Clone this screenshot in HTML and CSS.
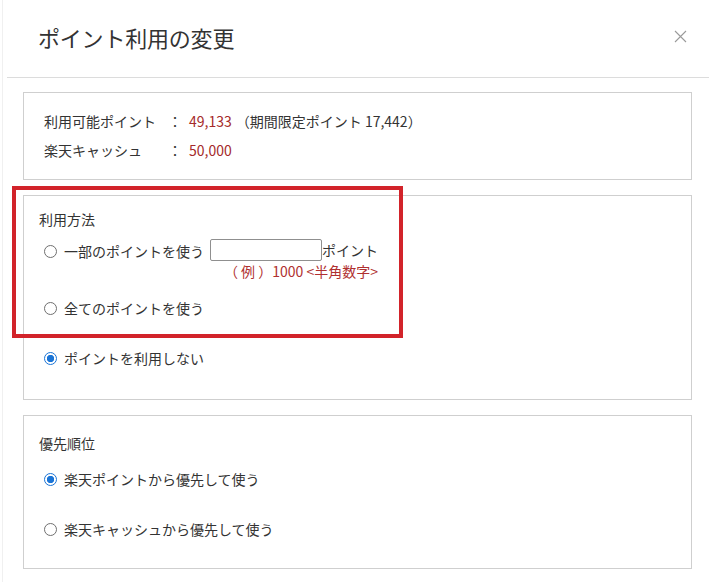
FILE: index.html
```html
<!DOCTYPE html>
<html lang="ja">
<head>
<meta charset="utf-8">
<title>ポイント利用の変更</title>
<link rel="stylesheet" href="styles.css">
</head>
<body>
<div class="modal">
  <header class="modal-header">
    <h1 class="modal-title">ポイント利用の変更</h1>
    <span class="close" aria-label="閉じる">
      <svg width="13" height="13" viewBox="0 0 13 13"><path d="M1 1L12 12M12 1L1 12" stroke="#9a9a9a" stroke-width="1.1" fill="none"/></svg>
    </span>
  </header>
  <div class="modal-body">
    <section class="box box-balance">
      <div class="bal-row"><span class="bal-label">利用可能ポイント</span><span class="bal-colon">：</span><span class="num">49,133</span><span class="bal-note">（期間限定ポイント 17,442）</span></div>
      <div class="bal-row"><span class="bal-label">楽天キャッシュ</span><span class="bal-colon">：</span><span class="num">50,000</span></div>
    </section>

    <section class="box box-method">
      <div class="box-title">利用方法</div>
      <div class="opt opt-partial">
        <span class="radio"></span>
        <span class="opt-label">一部のポイントを使う</span>
        <span class="amount">
          <span class="amount-line"><span class="amount-input"></span><span>ポイント</span></span>
          <span class="example">（ 例 ）1000 &lt;半角数字&gt;</span>
        </span>
      </div>
      <div class="opt opt-all"><span class="radio"></span><span class="opt-label">全てのポイントを使う</span></div>
      <div class="opt opt-none"><span class="radio checked"></span><span class="opt-label">ポイントを利用しない</span></div>
    </section>

    <section class="box box-priority">
      <div class="box-title">優先順位</div>
      <div class="opt opt-p1"><span class="radio checked"></span><span class="opt-label">楽天ポイントから優先して使う</span></div>
      <div class="opt opt-p2"><span class="radio"></span><span class="opt-label">楽天キャッシュから優先して使う</span></div>
    </section>
  </div>
</div>
<div class="highlight"></div>
</body>
</html>
```

FILE: styles.css
```css
* { box-sizing: border-box; }
html, body {
  margin: 0;
  padding: 0;
  background: #fff;
}
body {
  position: relative;
  width: 716px;
  height: 582px;
  overflow: hidden;
  font-family: "Noto Sans CJK JP", "Noto Sans", sans-serif;
  font-size: 14px;
  color: #333;
}
.modal {
  margin-left: 2px;
  border-left: 1px solid #f0f0f0;
  height: 582px;
}
.modal-header {
  margin: 0 7px 0 4px;
  height: 78px;
  border-bottom: 1px solid #dcdcdc;
  display: flex;
  align-items: center;
  justify-content: space-between;
  padding: 0 22px 4px 31px;
}
.modal-title {
  margin: 0;
  font-size: 22px;
  font-weight: normal;
  line-height: 30px;
  color: #333;
  letter-spacing: -0.2px;
}
.close {
  display: flex;
  width: 13px;
  height: 13px;
}
.modal-body {
  padding: 14px 24px 0 20px;
}
.box {
  border: 1px solid #cfcfcf;
  background: #fff;
}
.box + .box { margin-top: 15px; }

.box-balance {
  padding: 14px 20px;
  height: 88px;
}
.bal-row {
  line-height: 29px;
  display: flex;
  white-space: nowrap;
}
.bal-label { width: 124px; }
.bal-colon { width: 14px; margin-right: 7px; }
.num { color: #a52a2a; }
.bal-note { margin-left: 4px; }

.box-method {
  height: 205px;
  padding: 13px 15px 0 15px;
}
.box-priority {
  height: 154px;
  padding: 17px 15px 0 15px;
}
.box-title { line-height: 20px; }

.opt {
  display: flex;
  align-items: flex-start;
  line-height: 20px;
  padding-left: 5px;
}
.opt-label { margin-left: 7px; white-space: nowrap; }
.radio {
  flex: none;
  width: 13px;
  height: 13px;
  margin-top: 4px;
  border: 1px solid #6f6f6f;
  border-radius: 50%;
  background: #fff;
}
.radio.checked {
  border: 1.5px solid #1a74d6;
  background: radial-gradient(circle, #1a74d6 0 3.4px, #fff 4px);
}

.opt-partial { margin-top: 10px; }
.opt-partial .radio { margin-top: 6px; }
.opt-partial .opt-label { line-height: 24px; }
.amount {
  display: inline-flex;
  flex-direction: column;
  align-items: flex-end;
  margin-left: 6px;
}
.amount-line {
  display: flex;
  align-items: center;
  line-height: 22px;
}
.amount-input {
  display: inline-block;
  width: 112px;
  height: 22px;
  border: 1px solid #8f8f8f;
  border-radius: 2px;
  background: #fff;
}
.example {
  color: #b03030;
  line-height: 20px;
  white-space: nowrap;
}
.opt-all { margin-top: 17px; }
.opt-none { margin-top: 30px; }
.opt-p1 { margin-top: 16px; }
.opt-p2 { margin-top: 30px; }

.highlight {
  position: absolute;
  left: 12px;
  top: 186px;
  width: 391px;
  height: 152px;
  border: 4px solid #d2232a;
  pointer-events: none;
}
```
